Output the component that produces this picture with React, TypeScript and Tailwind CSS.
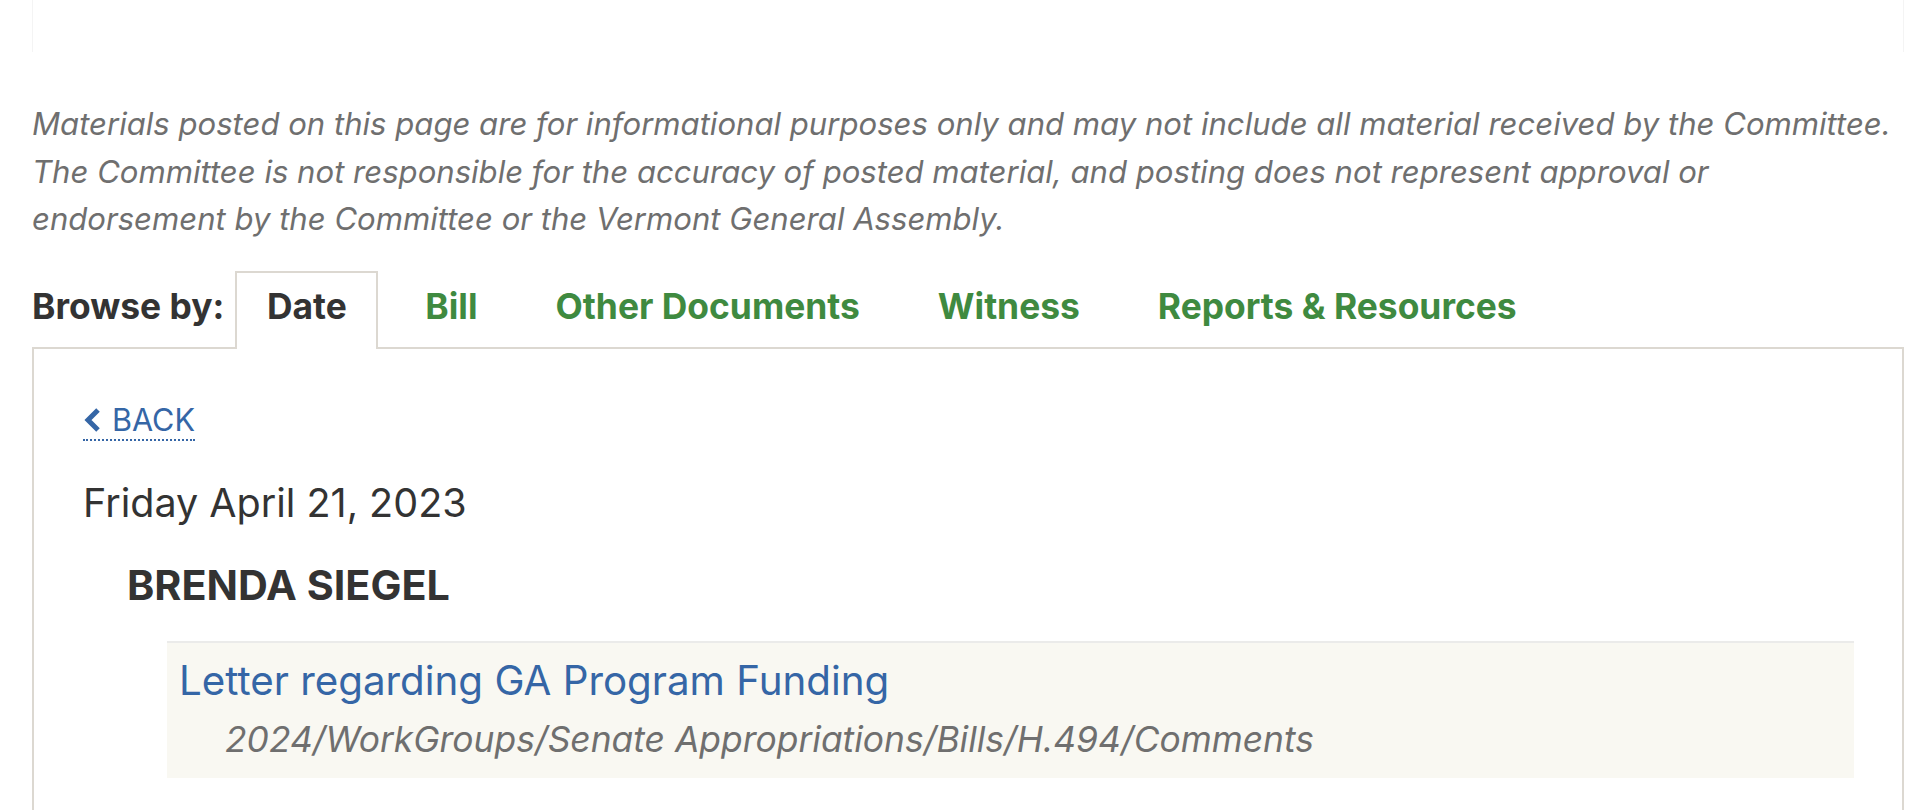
const tabs = ['Date', 'Bill', 'Other Documents', 'Witness', 'Reports & Resources']

export default function App() {
  return (
    <div className="min-h-screen bg-white font-['Inter',sans-serif] text-[#333] pl-[32px] pr-[24px]">
      {/* faint edge of the block above */}
      <div className="h-[52px] border-x border-[#f4f4f4]" />

      {/* Disclaimer */}
      <p className="mt-[49px] italic text-[31.1px] leading-[47.5px] text-[#6f6f6f] whitespace-nowrap">
        Materials posted on this page are for informational purposes only and may not include all material received by the Committee.
        <br />
        The Committee is not responsible for the accuracy of posted material, and posting does not represent approval or
        <br />
        endorsement by the Committee or the Vermont General Assembly.
      </p>

      {/* Tabs */}
      <div className="mt-[27px] flex items-end">
        <div className="h-[76px] pt-[16px] mr-[11px] text-[35.4px] leading-[40px] font-bold text-[#333] whitespace-nowrap">
          Browse by:
        </div>
        <div className="flex items-end gap-[16px]">
          {tabs.map((t, i) => (
            <div
              key={t}
              className={
                i === 0
                  ? 'relative z-10 -mb-[2px] h-[78px] pt-[14px] w-[143px] text-center border-2 border-b-0 border-[#dcd8d1] bg-white text-[35.4px] leading-[40px] font-bold text-[#333] whitespace-nowrap'
                  : 'h-[76px] pt-[16px] px-[31px] text-[35.4px] leading-[40px] font-bold text-[#3f8a40] whitespace-nowrap'
              }
            >
              {t}
            </div>
          ))}
        </div>
      </div>

      {/* Panel */}
      <div className="border-2 border-[#dcd8d1] pl-[49px] pr-[48px] pt-[53px] pb-[120px]">
        <a className="inline-flex items-center pb-[1px] border-b-2 border-dotted border-[#3566a6] text-[#3566a6] text-[30.6px] leading-[36px]">
          <svg width="18" height="26" viewBox="0 0 18 26" className="mr-[11px]" fill="none">
            <path d="M15 3 L5 13 L15 23" stroke="currentColor" strokeWidth="5" strokeLinejoin="miter" />
          </svg>
          BACK
        </a>

        <div className="mt-[38px] text-[39.5px] leading-[48px] text-[#333]">Friday April 21, 2023</div>

        <div className="mt-[34px] ml-[44px] text-[41.3px] leading-[48px] font-bold text-[#333]">BRENDA SIEGEL</div>

        <div className="mt-[32px] ml-[84px] bg-[#f9f8f2] border-t-2 border-[#ebebea] pt-[14px] pb-[16px] pl-[12px]">
          <a className="block text-[40.3px] leading-[48px] text-[#3566a6]">Letter regarding GA Program Funding</a>
          <div className="mt-[13px] ml-[46px] italic text-[35.4px] leading-[44px] text-[#6f6f6f]">
            2024/WorkGroups/Senate Appropriations/Bills/H.494/Comments
          </div>
        </div>
      </div>
    </div>
  )
}
